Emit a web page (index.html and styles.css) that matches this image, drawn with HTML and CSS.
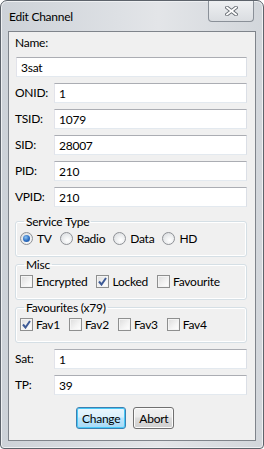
FILE: index.html
```html
<!DOCTYPE html>
<html lang="en">

<head>
    <meta charset="UTF-8">
    <title>Edit Channel</title>
    <link rel="stylesheet" href="styles.css">
</head>

<body>
    <div class="window">
        <div class="titlebar">
            <span class="title">Edit Channel</span>
            <span class="close">
                <svg width="13" height="10" viewBox="0 0 13 10">
                    <path d="M2 1.5 L11 8.5 M11 1.5 L2 8.5" stroke="#666c73" stroke-width="3.6" stroke-linecap="square" fill="none" />
                    <path d="M2 1.5 L11 8.5 M11 1.5 L2 8.5" stroke="#ffffff" stroke-width="1.8" stroke-linecap="square" fill="none" />
                </svg>
            </span>
        </div>
        <div class="client">
            <div class="label name-label">Name:</div>
            <input class="text name-input" type="text" value="3sat">

            <div class="row"><span class="label">ONID:</span><input class="text" type="text" value="1"></div>
            <div class="row"><span class="label">TSID:</span><input class="text" type="text" value="1079"></div>
            <div class="row"><span class="label">SID:</span><input class="text" type="text" value="28007"></div>
            <div class="row"><span class="label">PID:</span><input class="text" type="text" value="210"></div>
            <div class="row"><span class="label">VPID:</span><input class="text" type="text" value="210"></div>

            <fieldset class="group">
                <legend>Service Type</legend>
                <div class="opts radios">
                    <span class="opt"><span class="radio on"></span>TV</span>
                    <span class="opt"><span class="radio"></span>Radio</span>
                    <span class="opt"><span class="radio"></span>Data</span>
                    <span class="opt"><span class="radio"></span>HD</span>
                </div>
            </fieldset>

            <fieldset class="group">
                <legend>Misc</legend>
                <div class="opts">
                    <span class="opt"><span class="check"></span>Encrypted</span>
                    <span class="opt"><span class="check on"><svg width="9" height="9" viewBox="0 0 9 9"><path d="M1 4.5 L3.5 7.5 L8 1" stroke="#3d5a96" stroke-width="2" fill="none" /></svg></span>Locked</span>
                    <span class="opt"><span class="check"></span>Favourite</span>
                </div>
            </fieldset>

            <fieldset class="group">
                <legend>Favourites (x79)</legend>
                <div class="opts">
                    <span class="opt"><span class="check on"><svg width="9" height="9" viewBox="0 0 9 9"><path d="M1 4.5 L3.5 7.5 L8 1" stroke="#3d5a96" stroke-width="2" fill="none" /></svg></span>Fav1</span>
                    <span class="opt"><span class="check"></span>Fav2</span>
                    <span class="opt"><span class="check"></span>Fav3</span>
                    <span class="opt"><span class="check"></span>Fav4</span>
                </div>
            </fieldset>

            <div class="row sat"><span class="label">Sat:</span><input class="text" type="text" value="1"></div>
            <div class="row"><span class="label">TP:</span><input class="text" type="text" value="39"></div>

            <div class="buttons">
                <button class="btn default">Change</button>
                <button class="btn">Abort</button>
            </div>
        </div>
    </div>
</body>

</html>
```

FILE: styles.css
```css
html,
body {
    margin: 0;
    padding: 0;
    background: #ffffff;
}

body {
    font-family: Lato, "Noto Sans", sans-serif;
    font-size: 12px;
    letter-spacing: -0.25px;
    color: #000000;
}

.window {
    width: 264px;
    height: 449px;
    box-sizing: border-box;
    border: 1px solid #5d636b;
    border-radius: 7px 7px 4px 4px;
    background: linear-gradient(to right, #cdd2d8 0%, #dde0e4 45%, #e3e5e8 60%, #d2d6db 100%);
    box-shadow: inset 0 0 0 1px #eef0f2;
    display: flex;
    flex-direction: column;
}

.titlebar {
    height: 30px;
    display: flex;
    align-items: flex-start;
    justify-content: space-between;
}

.title {
    margin: 8px 0 0 8px;
    line-height: 16px;
}

.close {
    width: 44px;
    height: 20px;
    margin-right: 9px;
    border: 1px solid #8a9098;
    border-top: none;
    border-radius: 0 0 4px 4px;
    background: linear-gradient(#eef0f2, #dadde1);
    display: flex;
    align-items: center;
    justify-content: center;
}

.client {
    flex: 1;
    margin: 0 7px 7px 7px;
    border: 1px solid #7f848b;
    background: #f0f0f0;
    padding: 3px 8px 0 6px;
}

.label {
    line-height: 16px;
}

.name-label {
    margin-bottom: 6px;
}

.text {
    box-sizing: border-box;
    height: 20px;
    margin: 0;
    border: 1px solid #abadb3;
    border-color: #abadb3 #dbdfe6 #e3e9ef #e2e3ea;
    background: #ffffff;
    font: inherit;
    letter-spacing: inherit;
    padding: 0 4px;
    outline: none;
}

.name-input {
    display: block;
    width: 231px;
    margin-left: 1px;
}

.row {
    display: flex;
    align-items: center;
    margin-top: 6px;
}

.row .label {
    width: 39px;
    flex: none;
}

.row .text {
    flex: 1;
}

.group {
    margin: 7px 0 0 0;
    padding: 3px 6px 11px 4px;
    border: 1px solid #d5dfe5;
    border-radius: 3px;
    box-shadow: inset 0 0 0 1px #ffffff;
}

.group + .group {
    margin-top: 0;
}

.group legend {
    padding: 0 2px;
    margin-left: 4px;
    line-height: 15px;
}

.opts {
    display: flex;
    align-items: center;
    height: 13px;
    gap: 9px;
}

.opts.radios {
    gap: 8px;
}

.opt {
    display: flex;
    align-items: center;
    gap: 3px;
    line-height: 13px;
}

.radios .opt {
    gap: 4px;
}

.radio {
    width: 13px;
    height: 13px;
    box-sizing: border-box;
    border-radius: 50%;
    border: 1px solid #8e9196;
    background: radial-gradient(circle at 60% 65%, #ffffff 0%, #e6e8ea 60%, #d4d6d9 100%);
    display: flex;
    align-items: center;
    justify-content: center;
}

.radio.on::after {
    content: "";
    width: 7px;
    height: 7px;
    border-radius: 50%;
    background: radial-gradient(circle at 40% 35%, #8cc4f2 0%, #2a6bc0 55%, #1b4f94 100%);
}

.check {
    width: 13px;
    height: 13px;
    box-sizing: border-box;
    border: 1px solid #8e8f8f;
    background: linear-gradient(135deg, #dcdcdc 0%, #f4f4f4 60%, #ffffff 100%);
    box-shadow: inset 0 0 0 1px #f4f4f4;
    display: flex;
    align-items: center;
    justify-content: center;
}

.sat {
    margin-top: 6px;
}

.buttons {
    display: flex;
    gap: 7px;
    padding-left: 61px;
    margin-top: 12px;
}

.btn {
    height: 22px;
    box-sizing: border-box;
    margin: 0;
    padding: 0 5px;
    font: inherit;
    letter-spacing: inherit;
    color: #000000;
    border: 1px solid #707070;
    border-radius: 3px;
    background: linear-gradient(#f2f2f2 0%, #ebebeb 45%, #dddddd 50%, #cfcfcf 100%);
    box-shadow: inset 0 0 0 1px #fbfbfb;
}

.btn.default {
    border-color: #3c7fb1;
    background: linear-gradient(#eaf6fd 0%, #d9f0fc 45%, #bee6fd 50%, #a7d9f5 100%);
    box-shadow: inset 0 0 0 1px #48c9f7;
}
```
